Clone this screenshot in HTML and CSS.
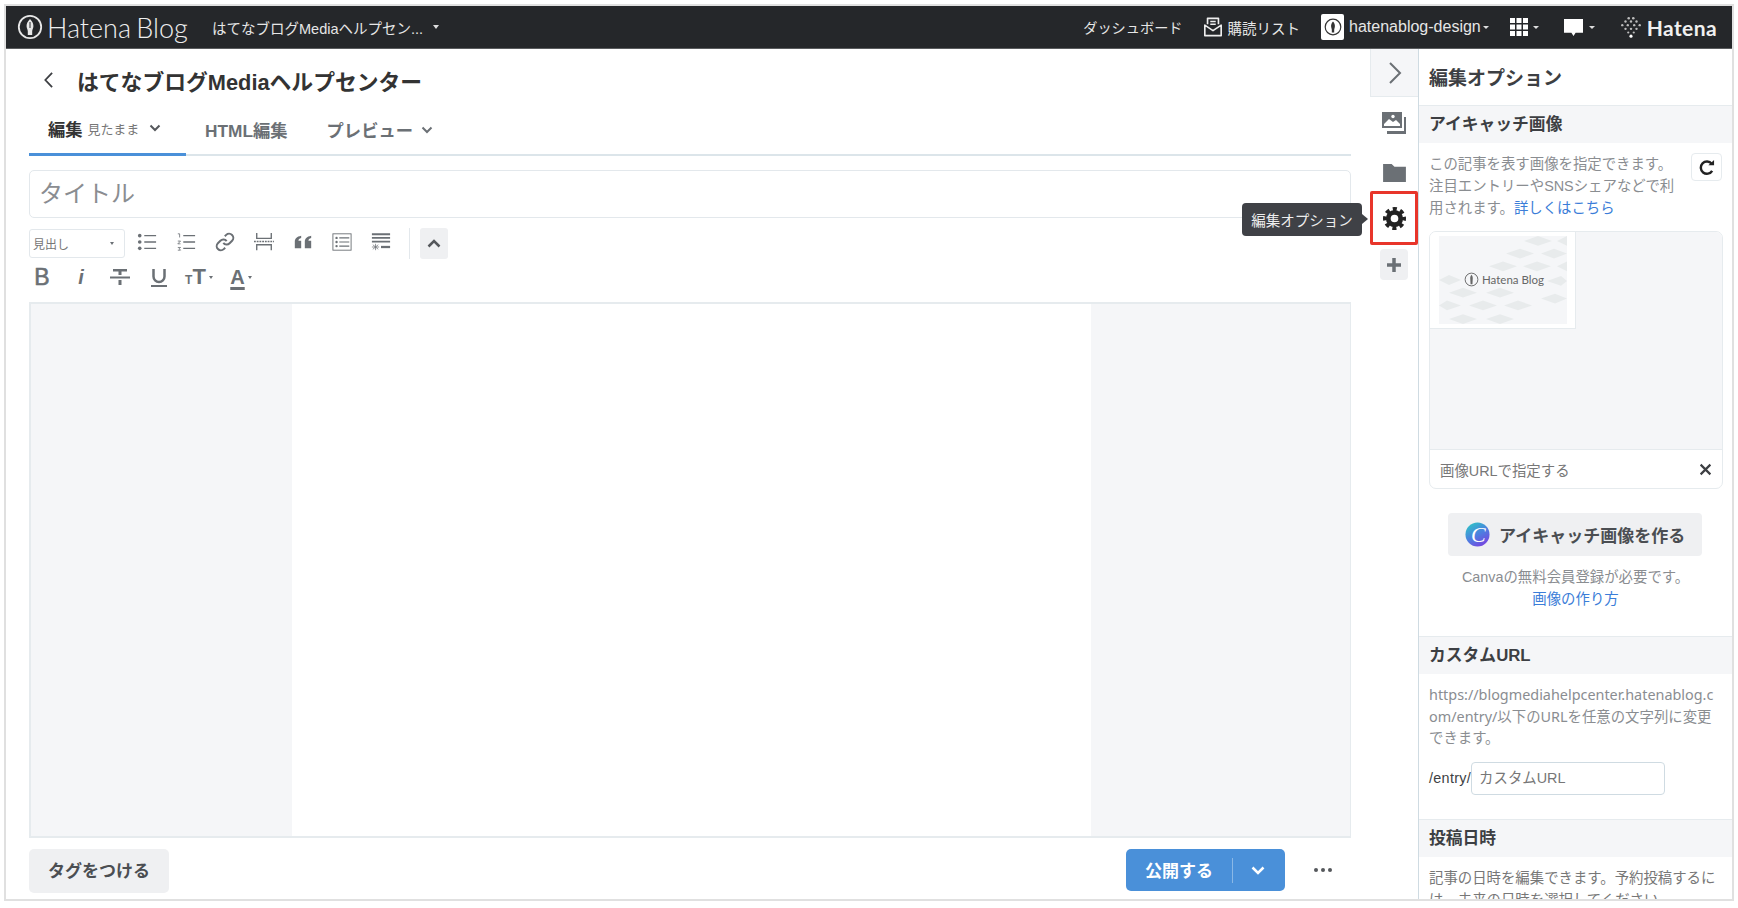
FILE: index.html
```html
<!DOCTYPE html>
<html lang="ja">
<head>
<meta charset="utf-8">
<title>Hatena Blog</title>
<link rel="stylesheet" href="styles.css">
</head>
<body>
<div class="frame">
  <header class="topbar">
    <div class="brand">
      <svg class="brand-mark" viewBox="0 0 26 26"><circle cx="13" cy="13" r="11.2" fill="none" stroke="#e8e8e8" stroke-width="1.8"/><path d="M13 5c2.600 2.600 3.600 5 3.400 7.500-.2 2-1.200 3.300-1.200 4.800V21h-4.400v-3.700c0-1.500-1-2.800-1.200-4.800C9.400 10 10.400 7.600 13 5z" fill="#e8e8e8"/><path d="M13 8v6" stroke="#25272a" stroke-width="1"/></svg>
      <span class="brand-name">Hatena Blog</span>
    </div>
    <div class="blog-select"><span>はてなブログMediaヘルプセン...</span><i class="caret"></i></div>
    <nav class="topnav">
      <span class="nav-dash">ダッシュボード</span>
      <span class="nav-subs">
        <svg class="nav-ico" viewBox="0 0 22 24"><path d="M5 9V2.500h12V9M2 10l9 6 9-6v11.500H2z" fill="none" stroke="#eee" stroke-width="1.800" stroke-linejoin="round"/><path d="M8 6h6M8 9h6" stroke="#eee" stroke-width="1.500"/></svg>
        <span>購読リスト</span>
      </span>
      <span class="nav-user">
        <span class="avatar"><svg viewBox="0 0 24 24"><circle cx="12" cy="12" r="8.500" fill="none" stroke="#333" stroke-width="1.300"/><path d="M12 6c1.800 2 2.300 4 2 6-.2 1.200-.7 2-.7 3v3h-2.600v-3c0-1-.5-1.800-.7-3-.3-2 .2-4 2-6z" fill="#333"/></svg></span>
        <span class="user-name">hatenablog-design</span><i class="caret small"></i>
      </span>
      <span class="nav-grid">
        <svg class="grid-ico" viewBox="0 0 18 18"><path fill="#fff" d="M0 0h5v5H0zM6.500 0h5v5h-5zM13 0h5v5h-5zM0 6.500h5v5H0zM6.500 6.500h5v5h-5zM13 6.500h5v5h-5zM0 13h5v5H0zM6.500 13h5v5h-5zM13 13h5v5h-5z"/></svg><i class="caret small"></i>
      </span>
      <span class="nav-msg">
        <svg class="msg-ico" viewBox="0 0 18 18"><path fill="#fff" d="M0 1h18v13h-7l-2 3-2-3H0z"/></svg><i class="caret small"></i>
      </span>
      <span class="nav-hatena">
        <svg class="hatena-ico" viewBox="0 0 24 24" fill="#bdbdbd"><circle cx="9.500" cy="2.500" r="1.400"/><circle cx="14.500" cy="2.500" r="1.400"/><circle cx="6" cy="6" r="1.300"/><circle cx="12" cy="6" r="1.300"/><circle cx="18" cy="6" r="1.300"/><circle cx="2.500" cy="10" r="1.300"/><circle cx="8.500" cy="10" r="1.300"/><circle cx="15.500" cy="10" r="1.300"/><circle cx="21.500" cy="10" r="1.300"/><circle cx="6" cy="14" r="1.300"/><circle cx="12" cy="14" r="1.300"/><circle cx="18" cy="14" r="1.300"/><circle cx="9" cy="18" r="1.200"/><circle cx="15" cy="18" r="1.200"/><circle cx="12" cy="22" r="1.700" fill="#fff"/></svg>
        <span class="hatena-name">Hatena</span>
      </span>
    </nav>
  </header>

  <main class="workspace">
    <section class="editor">
      <div class="title-row">
        <svg class="back" viewBox="0 0 12 20"><path d="M10 2 2.500 10 10 18" fill="none" stroke="#3d3f43" stroke-width="2"/></svg>
        <h1 class="blog-title">はてなブログMediaヘルプセンター</h1>
      </div>
      <div class="tabs">
        <div class="tab tab-active"><b>編集</b><span class="tab-sub">見たまま</span><svg class="chev" viewBox="0 0 12 8"><path d="M1.500 1.500 6 6l4.500-4.500" fill="none" stroke="#55585c" stroke-width="2"/></svg></div>
        <div class="tab tab-html"><b>HTML編集</b></div>
        <div class="tab tab-preview"><b>プレビュー</b><svg class="chev" viewBox="0 0 12 8"><path d="M1.500 1.500 6 6l4.500-4.500" fill="none" stroke="#6b7075" stroke-width="2"/></svg></div>
      </div>
      <div class="title-input"><span>タイトル</span></div>
      <div class="toolbar">
        <div class="format-select"><span>見出し</span><i class="caret tiny"></i></div>
        <div class="tool-group">
          <span class="tool"><svg viewBox="0 0 22 22"><g fill="#6b7075"><circle cx="3" cy="4" r="2"/><circle cx="3" cy="11" r="2"/><circle cx="3" cy="18" r="2"/></g><path d="M8 4h13M8 11h13M8 18h13" stroke="#6b7075" stroke-width="1.500"/></svg></span>
          <span class="tool"><svg viewBox="0 0 22 22"><path d="M2 2h2v4M2 10h3l-3 3h3M2 17h3l-1.500 1.500L5 20H2" fill="none" stroke="#6b7075" stroke-width=".9"/><path d="M8 4h13M8 11h13M8 18h13" stroke="#6b7075" stroke-width="1.500"/></svg></span>
          <span class="tool"><svg viewBox="0 0 24 24"><path d="M10 13a5 5 0 0 0 7.540.54l3-3a5 5 0 0 0-7.070-7.070l-1.720 1.710M14 11a5 5 0 0 0-7.540-.54l-3 3a5 5 0 0 0 7.070 7.070l1.710-1.710" fill="none" stroke="#6b7075" stroke-width="2.400"/></svg></span>
          <span class="tool"><svg viewBox="0 0 22 22"><path d="M3 1v6h16V1M3 20v-6h16v6" fill="none" stroke="#6b7075" stroke-width="1.500"/><path d="M0 10.500h22" stroke="#6b7075" stroke-width="1.500" stroke-dasharray="2 1"/></svg></span>
          <span class="tool"><svg viewBox="0 0 22 22"><path fill="#6b7075" d="M2 11c0-4 2-6 7-7v2.500c-2 .5-3 1.500-3 3h3V18H2zM13 11c0-4 2-6 7-7v2.500c-2 .5-3 1.500-3 3h3V18h-7z"/></svg></span>
          <span class="tool"><svg viewBox="0 0 22 22"><rect x="1" y="2" width="20" height="18" fill="none" stroke="#6b7075"/><g fill="#6b7075"><circle cx="5" cy="6.500" r="1.300"/><circle cx="5" cy="11" r="1.300"/><circle cx="5" cy="15.500" r="1.300"/></g><path d="M8 6.500h11M8 11h11M8 15.500h11" stroke="#6b7075" stroke-width="1.300"/></svg></span>
          <span class="tool"><svg viewBox="0 0 22 22"><path d="M1 2.500h20M1 6.500h20M1 10.500h20" stroke="#6b7075" stroke-width="2"/><path d="M1 16.500h8M5 13v7M2 14l6 5M8 14l-6 5" stroke="#6b7075" stroke-width=".8"/><path d="M11 16.500h10" stroke="#6b7075" stroke-width="2.500"/></svg></span>
        </div>
        <span class="tool-sep"></span>
        <span class="collapse"><svg viewBox="0 0 14 9"><path d="M1.500 7.500 7 2l5.500 5.500" fill="none" stroke="#55585c" stroke-width="2.500"/></svg></span>
      </div>
      <div class="toolbar toolbar-second">
        <span class="fmt fmt-b">B</span>
        <span class="fmt fmt-i">i</span>
        <span class="fmt"><svg viewBox="0 0 22 22"><path d="M4 3h14v2.500H4zM9.500 5.500h3V9h-3zM9.500 14h3v5h-3z" fill="#6b7075"/><path d="M1 11.500h20" stroke="#6b7075" stroke-width="2"/></svg></span>
        <span class="fmt"><svg viewBox="0 0 22 22"><path d="M5.500 3v7.500a5.500 5.500 0 0 0 11 0V3" fill="none" stroke="#6b7075" stroke-width="2.500"/><path d="M3 20h16" stroke="#6b7075" stroke-width="2"/></svg></span>
        <span class="fmt fmt-size"><small>T</small>T<i class="caret tiny"></i></span>
        <span class="fmt fmt-color"><u>A</u><i class="caret tiny"></i></span>
      </div>
      <div class="canvas"><div class="canvas-page"></div></div>
      <div class="actions">
        <button class="tag-btn">タグをつける</button>
        <div class="publish-wrap">
          <div class="publish"><span class="publish-label">公開する</span><span class="publish-sep"></span><svg class="publish-chev" viewBox="0 0 14 9"><path d="M1.500 1.500 7 7l5.500-5.500" fill="none" stroke="#fff" stroke-width="2.500"/></svg></div>
          <span class="more"><i></i><i></i><i></i></span>
        </div>
      </div>
    </section>

    <aside class="rail">
      <div class="rail-toggle"><svg viewBox="0 0 14 24"><path d="M2 2l10 10L2 22" fill="none" stroke="#6b7075" stroke-width="2"/></svg></div>
      <div class="rail-item rail-image"><svg viewBox="0 0 26 24"><path d="M1 1h20v16H1z" fill="#6b7075"/><path d="M3 13l5-5 4 3 3-2 4 4v2H3z" fill="#fff"/><circle cx="12" cy="5.500" r="1.700" fill="#fff"/><path d="M23 6h2v17H6v-3h17z" fill="#6b7075"/></svg></div>
      <div class="rail-item rail-folder"><svg viewBox="0 0 24 20"><path d="M0 1h9l3 3h12v16H0z" fill="#6b7075"/></svg></div>
      <div class="rail-active"><svg viewBox="0 0 24 24"><circle cx="12" cy="12" r="6.500" fill="none" stroke="#222" stroke-width="5"/><circle cx="12" cy="12" r="10" fill="none" stroke="#222" stroke-width="4" stroke-dasharray="4.250 3.600" stroke-dashoffset="2.100"/></svg>
        <div class="tooltip">編集オプション</div>
      </div>
      <div class="rail-plus"><svg viewBox="0 0 16 16"><path d="M8 1v14M1 8h14" stroke="#6b7075" stroke-width="3.500"/></svg></div>
    </aside>

    <aside class="panel">
      <h2 class="panel-title">編集オプション</h2>
      <h3 class="section-head">アイキャッチ画像</h3>
      <div class="section-body eyecatch">
        <div class="intro">
          <p class="note">この記事を表す画像を指定できます。注目エントリーやSNSシェアなどで利用されます。<a class="link">詳しくはこちら</a></p>
          <span class="refresh"><svg viewBox="0 0 18 18"><path d="M14.500 5A6.500 6.500 0 1 0 15 12.500" fill="none" stroke="#222" stroke-width="2.600"/><path d="M11 6.500h6V1z" fill="#222"/></svg></span>
        </div>
        <div class="image-box">
          <div class="image-grid">
            <div class="thumb">
              <svg class="thumb-pattern" viewBox="0 0 128 90" preserveAspectRatio="none"><g fill="#e8ebec"><path d="M85 5l14-5 14 5-14 5zM118 5l10-5v10zM67 18l14-5 14 5-14 5zM102 18l13-5 13 5-13 5zM50 31l14-5 14 5-14 5zM84 31l14-5 14 5-14 5zM118 31l10-5v10zM0 45l10-5 12 5-12 5zM108 46l14-5 6 5-6 5zM10 58l14-5 14 5-14 5zM47 58l14-5 14 5-14 5zM102 64l14-5 12 5-12 5zM0 71l8-5 14 5-14 5zM30 71l14-5 14 5-14 5zM65 71l14-5 14 5-14 5zM10 85l14-5 14 5-14 5zM47 85l14-5 14 5-14 5z"/></g></svg>
              <span class="thumb-logo"><svg viewBox="0 0 16 16"><circle cx="8" cy="8" r="6.800" fill="none" stroke="#666" stroke-width="1"/><path d="M8 3c1.200 1.500 1.500 3 1.300 4.500L9 13H7l-.3-5.500C6.500 6 6.800 4.500 8 3z" fill="#666"/></svg><span>Hatena Blog</span></span>
            </div>
          </div>
          <div class="image-url"><span>画像URLで指定する</span><svg viewBox="0 0 12 12"><path d="M1.500 1.500l9 9M10.500 1.500l-9 9" stroke="#3d3f43" stroke-width="2"/></svg></div>
        </div>
        <div class="canva-btn">
          <svg class="canva-logo" viewBox="0 0 26 26"><defs><linearGradient id="cg" x1="0.200" y1="0" x2="0.800" y2="1"><stop offset="0" stop-color="#2ec4c6"/><stop offset=".5" stop-color="#4c7fe0"/><stop offset="1" stop-color="#7b3fe0"/></linearGradient></defs><circle cx="13" cy="13" r="12.500" fill="url(#cg)"/></svg>
          <span class="canva-c">C</span>
          <span>アイキャッチ画像を作る</span>
        </div>
        <p class="canva-note">Canvaの無料会員登録が必要です。<br><a class="link">画像の作り方</a></p>
      </div>
      <h3 class="section-head bordered">カスタムURL</h3>
      <div class="section-body custom-url">
        <p class="note url-note">https://blogmediahelpcenter.hatenablog.com/entry/以下のURLを任意の文字列に変更できます。</p>
        <div class="url-row"><span class="url-prefix">/entry/</span><span class="url-input">カスタムURL</span></div>
      </div>
      <h3 class="section-head bordered">投稿日時</h3>
      <div class="section-body">
        <p class="date-note">記事の日時を編集できます。予約投稿するには、未来の日時を選択してください。</p>
      </div>
    </aside>
  </main>
</div>
</body>
</html>
```

FILE: styles.css
```css
* { box-sizing: border-box; }
html, body { margin: 0; height: 100%; overflow: hidden; background: #fff; }
body {
  font-family: "Liberation Sans", "Noto Sans CJK JP", sans-serif;
  color: #3d3f43;
  font-size: 14px;
}
p, h1, h2, h3 { margin: 0; }
button { font-family: inherit; border: 0; }

.frame {
  width: 1730px;
  height: 897px;
  margin: 4px 0 0 4px;
  border: 2px solid #e0e0e0;
  display: flex;
  flex-direction: column;
  overflow: hidden;
}

/* top bar */
.topbar {
  flex: none;
  height: 43px;
  background: #25272a;
  color: #e6e6e6;
  display: flex;
  align-items: center;
  padding-left: 11px;
  border-bottom: 1px solid #5a5c5e;
}
.brand { display: flex; align-items: center; gap: 4px; width: 195px; flex: none; }
.brand-mark { width: 26px; height: 26px; flex: none; }
.brand-name {
  font-family: Lato, sans-serif;
  font-weight: 300;
  font-size: 27px;
  word-spacing: -2px;
  color: #eee;
  white-space: nowrap;
}
.blog-select { display: flex; align-items: center; gap: 10px; font-size: 14.500px; }
.caret {
  display: inline-block;
  width: 0; height: 0;
  border: 3.5px solid transparent;
  border-top: 4px solid #ddd;
  border-bottom: 0;
}
.caret.small { border-width: 3.500px; border-bottom: 0; }
.caret.tiny { border-width: 2px; border-top: 3px solid #6b7075; border-bottom: 0; }
.topnav { margin-left: auto; display: flex; align-items: center; font-size: 14.500px; padding-right: 15px; }
.nav-subs, .nav-user, .nav-grid, .nav-msg, .nav-hatena { display: flex; align-items: center; }
.nav-dash { font-size: 14.200px; }
.nav-subs { margin-left: 20px; gap: 5px; }
.nav-ico { width: 20px; height: 24px; }
.nav-user { margin-left: 21px; }
.avatar { width: 23px; height: 26px; background: #fff; border-radius: 2px; display: flex; align-items: center; justify-content: center; }
.avatar svg { width: 22px; height: 22px; }
.user-name { margin-left: 5px; margin-right: 2px; font-size: 16px; }
.nav-grid { margin-left: 21px; gap: 5px; }
.grid-ico { width: 18px; height: 18px; }
.nav-msg { margin-left: 25px; gap: 6px; }
.msg-ico { width: 19px; height: 19px; }
.nav-hatena { margin-left: 25px; gap: 5px; }
.hatena-ico { width: 22px; height: 22px; }
.hatena-name { font-family: Lato, sans-serif; font-size: 21px; font-weight: 700; color: #f0f0f0; letter-spacing: .4px; }

/* workspace */
.workspace { flex: 1; min-height: 0; display: flex; }
.editor {
  width: 1364px;
  flex: none;
  padding: 0 19px 0 23px;
  display: flex;
  flex-direction: column;
}
.title-row { height: 64px; display: flex; align-items: center; padding: 0 0 2px 13px; flex: none; }
.back { width: 13px; height: 18px; flex: none; }
.blog-title { font-size: 21.800px; font-weight: 700; margin-left: 22px; color: #333; }

.tabs { flex: none; height: 43px; display: flex; border-bottom: 2px solid #dce5ea; }
.tab { height: 43px; display: flex; align-items: center; font-size: 17.300px; color: #6b7075; padding-bottom: 10px; }
.tab-active { width: 157px; padding-left: 19px; border-bottom: 3px solid #4a90d9; color: #333; }
.tab-sub { font-size: 13px; color: #777; margin-left: 5px; }
.chev { width: 12px; height: 8px; margin-left: 10px; }
.tab-html { margin-left: 19px; }
.tab-preview { margin-left: 39px; }
.tab-preview .chev { margin-left: 8px; }

.title-input {
  flex: none;
  height: 48px;
  margin-top: 14px;
  border: 1px solid #e3e8ec;
  border-radius: 5px;
  padding-left: 9px;
  font-size: 24px;
  line-height: 46px;
  color: #8a8d91;
}
.toolbar { flex: none; display: flex; align-items: center; height: 28px; margin-top: 11px; }
.format-select {
  width: 96px; height: 29px;
  border: 1px solid #e3e8ec;
  border-radius: 3px;
  display: flex; align-items: center; justify-content: space-between;
  padding: 0 10px 0 3px;
  font-size: 12px; color: #777;
}
.tool-group { display: flex; margin-left: 12px; gap: 19px; }
.tool { width: 20px; height: 20px; display: block; margin-top: -3px; }
.tool svg, .fmt svg { width: 100%; height: 100%; display: block; }
.tool-sep { width: 1px; height: 31px; background: #e3e8ec; margin-left: 18px; }
.collapse { width: 28px; height: 31px; margin-left: 10px; background: #eff0f2; border-radius: 3px; display: flex; align-items: center; justify-content: center; }
.collapse svg { width: 14px; height: 9px; }

.toolbar-second { height: 30px; margin-top: 5px; padding-left: 2px; }
.fmt { width: 22px; height: 22px; display: flex; align-items: center; justify-content: center; color: #6b7075; font-weight: 700; font-size: 21px; margin-right: 17px; flex: none; }
.fmt-b { font-weight: 400; font-size: 23px; -webkit-text-stroke: .6px #6b7075; }
.fmt-i { font-style: italic; font-size: 20px; }
.fmt-size { width: 28px; margin-right: 10px; font-size: 22px; margin-left: -2px; }
.fmt-size small { font-size: 12px; margin-top: 6px; }
.fmt-size .caret { margin: 0 0 0 3px; }
.fmt-color { width: 28px; margin: 0 0 0 4px; font-size: 20px; }
.fmt-color u { text-decoration-thickness: 3px; text-underline-offset: 3px; }
.fmt-color .caret { margin-left: 3px; }

.canvas {
  flex: none;
  height: 536px;
  margin-top: 10px;
  background: #f5f6f8;
  border: 2px solid #e6ebee;
  border-right-width: 1px;
  display: flex;
  justify-content: flex-start;
}
.canvas-page { width: 799px; margin-left: 261px; background: #fff; }

.actions { flex: none; margin-top: 11px; display: flex; justify-content: space-between; align-items: flex-start; }
.tag-btn {
  width: 140px; height: 44px;
  padding: 0 0 3px;
  background: #eff0f2;
  border-radius: 5px;
  color: #4b4e52;
  font-size: 17px;
  font-weight: 700;
}
.publish-wrap { display: flex; align-items: center; }
.publish {
  width: 159px; height: 42px;
  background: #4a90d9;
  border-radius: 5px;
  color: #fff;
  font-weight: 700;
  font-size: 17px;
  display: flex;
  align-items: center;
  padding-left: 19px;
}
.publish-label { width: 68px; margin-top: -2px; }
.publish-sep { width: 1px; height: 25px; background: #8ab8e6; margin-left: 19px; }
.publish-chev { width: 14px; height: 9px; margin-left: 18px; }
.more { display: flex; gap: 3px; margin-left: 29px; margin-right: 19px; }
.more i { width: 4px; height: 4px; border-radius: 50%; background: #55585c; }

/* rail */
.rail { width: 49px; flex: none; border-right: 1px solid #cfdbe2; display: flex; flex-direction: column; align-items: center; }
.rail-toggle { width: 48px; height: 48px; background: #f5f6f8; border: 1px solid #e6ebee; border-top: 0; border-right: 0; display: flex; align-items: center; justify-content: center; flex: none; }
.rail-toggle svg { width: 14px; height: 24px; }
.rail-item { flex: none; display: flex; align-items: center; justify-content: center; width: 48px; }
.rail-image { height: 52px; }
.rail-image svg { width: 26px; height: 24px; }
.rail-folder { height: 42px; padding-top: 4px; }
.rail-folder svg { width: 23px; height: 19px; }
.rail-active {
  position: relative;
  width: 48px; height: 54px;
  border: 3px solid #e8352a;
  border-radius: 2px;
  display: flex; align-items: center; justify-content: center;
  flex: none;
}
.rail-active svg { width: 23px; height: 23px; }
.tooltip {
  position: absolute;
  right: 53px;
  top: 9px;
  width: 120px; height: 33px;
  background: #3f4146;
  color: #eee;
  border-radius: 4px;
  font-size: 14.500px;
  display: flex; align-items: center; justify-content: center;
}
.tooltip::after {
  content: "";
  position: absolute;
  right: -6px; top: 11px;
  border-left: 6px solid #3f4146;
  border-top: 5px solid transparent;
  border-bottom: 5px solid transparent;
}
.rail-plus { width: 28px; height: 31px; margin-top: 4px; background: #eff0f2; border-radius: 4px; display: flex; align-items: center; justify-content: center; flex: none; }
.rail-plus svg { width: 16px; height: 16px; }

/* panel */
.panel { flex: 1; min-width: 0; overflow: hidden; }
.panel-title { height: 57px; font-size: 19px; font-weight: 700; line-height: 60px; padding-left: 10px; color: #3d3f43; border-bottom: 1px solid #e6ebee; }
.section-head { height: 37px; background: #f5f6f8; font-size: 16.800px; font-weight: 700; line-height: 37px; padding-left: 10px; color: #3d3f43; }
.section-head.bordered { border-top: 1px solid #e6ebee; height: 38px; line-height: 37px; }
.section-body { padding: 0 10px; }
.note { font-size: 14.400px; line-height: 22px; color: #8a8d91; }
.link { color: #3b7dd8; }
.intro { display: flex; align-items: flex-start; padding-top: 10px; justify-content: space-between; }
.intro .note { width: 254px; }
.refresh { width: 31px; height: 28px; border: 1px solid #e6ebee; border-radius: 4px; display: flex; align-items: center; justify-content: center; flex: none; }
.refresh svg { width: 17px; height: 17px; }
.image-box { margin-top: 12px; height: 258px; width: 294px; border: 1px solid #e6ebee; border-radius: 7px; overflow: hidden; display: flex; flex-direction: column; }
.image-grid { flex: 1; background: #f5f6f8; border-bottom: 1px solid #e6ebee; }
.thumb { position: relative; width: 146px; height: 97px; background: #fff; border-right: 1px solid #e6ebee; border-bottom: 1px solid #e6ebee; padding: 4px 9px 4px 9px; }
.thumb-pattern { display: block; width: 128px; height: 88px; background: #f5f6f8; }
.thumb-logo { position: absolute; left: 34px; top: 40px; display: flex; align-items: center; gap: 3px; font-family: Lato, sans-serif; font-size: 11.500px; color: #666; }
.thumb-logo svg { width: 15px; height: 15px; }
.image-url { height: 38px; flex: none; display: flex; align-items: center; justify-content: space-between; padding: 0 10px; font-size: 14.400px; color: #777; }
.image-url svg { width: 13px; height: 13px; }
.canva-btn { position: relative; width: 254px; height: 43px; margin: 24px 0 0 19px; background: #eff0f2; border-radius: 4px; display: flex; align-items: center; padding-left: 17px; gap: 9px; font-size: 17px; font-weight: 700; color: #4b4e52; }
.canva-logo { width: 25px; height: 25px; flex: none; }
.canva-c { position: absolute; left: 23px; top: 10px; font-family: "Liberation Serif", serif; font-style: italic; font-size: 22px; font-weight: 400; color: #fff; line-height: 24px; }
.canva-note { text-align: center; font-size: 14.400px; line-height: 21.500px; color: #8a8d91; margin-top: 11px; padding-bottom: 26px; width: 293px; }
.custom-url { padding-top: 10px; height: 145px; }
.url-note { word-break: break-all; width: 290px; line-height: 21.500px; font-family: "Noto Sans", "Noto Sans CJK JP", sans-serif; font-size: 14.400px; }
.url-row { display: flex; align-items: center; margin-top: 13px; font-size: 14.400px; color: #3d3f43; }
.url-prefix { letter-spacing: .3px; }
.url-input { width: 194px; height: 33px; border: 1px solid #cfdbe2; border-radius: 4px; padding-left: 7px; line-height: 31px; color: #777; }
.date-note { font-size: 14.400px; line-height: 22px; color: #777; padding-top: 10px; width: 298px; }
```
